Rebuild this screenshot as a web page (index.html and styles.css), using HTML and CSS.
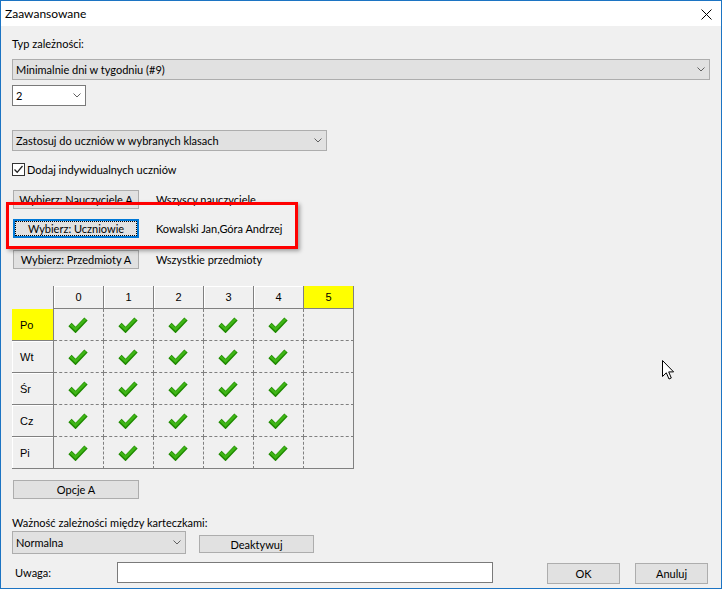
FILE: index.html
```html
<!DOCTYPE html>
<html lang="pl">
<head>
    <meta charset="UTF-8">
    <title>Zaawansowane</title>
    <link rel="stylesheet" href="styles.css">
</head>
<body>
    <svg width="0" height="0" class="defs">
        <symbol id="tick" viewBox="0 0 20 17">
            <path d="M2 8.5 L7.5 14 L18 3" fill="none" stroke="#1f8a00" stroke-width="4.6"/>
            <path d="M2.6 8.6 L7.5 13.2 L17.4 3.2" fill="none" stroke="#3fb516" stroke-width="2.6"/>
        </symbol>
        <symbol id="chev" viewBox="0 0 8 5">
            <path d="M0.5 0.5 L4 4 L7.5 0.5" fill="none" stroke="#606060" stroke-width="1"/>
        </symbol>
    </svg>

    <div class="window">
        <div class="titlebar">
            <span class="title">Zaawansowane</span>
            <svg class="close" width="11" height="11" viewBox="0 0 11 11">
                <path d="M0.5 0.5 L10.5 10.5 M10.5 0.5 L0.5 10.5" stroke="#000" stroke-width="1"/>
            </svg>
        </div>

        <div class="content">
            <div class="label">Typ zależności:</div>
            <div class="combo combo-type">
                <span>Minimalnie dni w tygodniu (#9)</span>
                <svg class="chev"><use href="#chev"/></svg>
            </div>
            <div class="combo combo-num">
                <span>2</span>
                <svg class="chev"><use href="#chev"/></svg>
            </div>
            <div class="combo combo-apply">
                <span>Zastosuj do uczniów w wybranych klasach</span>
                <svg class="chev"><use href="#chev"/></svg>
            </div>

            <div class="check">
                <span class="box">
                    <svg width="11" height="11" viewBox="0 0 11 11"><path d="M1.5 5.5 L4.2 8.3 L9.5 2" fill="none" stroke="#222" stroke-width="1.3"/></svg>
                </span>
                <span>Dodaj indywidualnych uczniów</span>
            </div>

            <div class="pick-list">
                <div class="pick-row">
                    <div class="btn btn-pick">Wybierz: Nauczyciele A</div>
                    <span class="pick-value">Wszyscy nauczyciele</span>
                </div>
                <div class="pick-row row-students">
                    <div class="btn btn-pick btn-focus">Wybierz: Uczniowie</div>
                    <span class="pick-value">Kowalski Jan,Góra Andrzej</span>
                </div>
                <div class="pick-row row-subjects">
                    <div class="btn btn-pick">Wybierz: Przedmioty A</div>
                    <span class="pick-value">Wszystkie przedmioty</span>
                </div>
                <div class="highlight"></div>
            </div>

            <div class="daygrid" id="daygrid"></div>

            <div class="btn btn-pick btn-options">Opcje A</div>

            <div class="label label-weight">Ważność zależności między karteczkami:</div>
            <div class="weight-row">
                <div class="combo combo-weight">
                    <span>Normalna</span>
                    <svg class="chev"><use href="#chev"/></svg>
                </div>
                <div class="btn btn-deact">Deaktywuj</div>
            </div>

            <div class="bottom-row">
                <span class="note-label">Uwaga:</span>
                <div class="note-input"></div>
                <div class="btn btn-ok">OK</div>
                <div class="btn btn-cancel">Anuluj</div>
            </div>
        </div>

        <svg class="cursor" width="13" height="21" viewBox="0 0 13 21">
            <path d="M0.5 0.5 L0.5 16.5 L4.3 12.8 L7 19 L9.3 18 L6.7 11.9 L11.6 11.9 Z" fill="#fff" stroke="#000" stroke-width="1"/>
        </svg>
    </div>

    <script>
        // siatka dni i lekcji
        const dni = ['Po', 'Wt', 'Śr', 'Cz', 'Pi'];
        const lekcje = [0, 1, 2, 3, 4, 5];
        const grid = document.getElementById('daygrid');

        let html = '<div class="corner"></div>';
        lekcje.forEach(function (l) {
            const zolty = l === 5 ? ' yellow' : '';
            html += '<div class="col-head' + zolty + '"><span>' + l + '</span></div>';
        });

        dni.forEach(function (d, i) {
            const zolty = i === 0 ? ' yellow' : '';
            const ostatni = i === dni.length - 1 ? ' last-row' : '';
            html += '<div class="row-head' + zolty + ostatni + '">' + d + '</div>';
            lekcje.forEach(function (l) {
                let cls = 'cell' + ostatni;
                if (l === 5) cls += ' last-col';
                html += '<div class="' + cls + '">';
                if (l < 5) html += '<svg class="tick"><use href="#tick"/></svg>';
                html += '</div>';
            });
        });

        grid.innerHTML = html;
    </script>
</body>
</html>
```

FILE: styles.css
```css
body {
    margin: 0;
    font-family: Lato, "Noto Sans", sans-serif;
    font-size: 11px;
    color: #000;
}
.defs {
    position: absolute;
}
.window {
    position: relative;
    width: 720px;
    height: 587px;
    border: 1px solid #1c74c3;
    background: #f0f0f0;
    overflow: hidden;
}
.titlebar {
    height: 25px;
    background: #fff;
    display: flex;
    align-items: center;
    justify-content: space-between;
    padding: 0 9px 0 4px;
    font-size: 12px;
}
.close {
    display: block;
    margin-top: 1px;
}
.content {
    padding: 10px 11px 0;
}
.label {
    height: 16px;
    line-height: 16px;
}
.combo {
    box-sizing: border-box;
    display: flex;
    align-items: center;
    justify-content: space-between;
    height: 21px;
    border: 1px solid #adadad;
    background: #e1e1e1;
    padding: 0 4px 0 3px;
    white-space: nowrap;
}
.chev {
    width: 8px;
    height: 5px;
    flex: none;
}
.combo-type {
    width: 698px;
    margin-top: 7px;
}
.combo-num {
    width: 74px;
    margin-top: 5px;
    background: #fff;
    border-color: #7a7a7a;
}
.combo-apply {
    width: 315px;
    margin-top: 24px;
}
.check {
    display: flex;
    align-items: center;
    height: 13px;
    margin-top: 12px;
}
.check .box {
    box-sizing: border-box;
    width: 13px;
    height: 13px;
    border: 1px solid #333;
    background: #fff;
    margin-right: 2px;
}
.check .box svg {
    display: block;
}
.btn {
    box-sizing: border-box;
    display: flex;
    align-items: center;
    justify-content: center;
    border: 1px solid #adadad;
    background: #e1e1e1;
    white-space: nowrap;
}
.pick-list {
    position: relative;
    margin-top: 14px;
}
.pick-row {
    display: flex;
    align-items: center;
    height: 19px;
}
.row-students {
    margin-top: 10px;
}
.row-subjects {
    margin-top: 12px;
}
.btn-pick {
    width: 126px;
    height: 19px;
    margin-left: 1px;
}
.btn-focus {
    border-color: #0078d7;
    box-shadow: inset 0 0 0 1px #0078d7;
    outline: 1px dotted #000;
    outline-offset: -3px;
}
.pick-value {
    margin-left: 17px;
}
.highlight {
    position: absolute;
    left: -6px;
    top: 12px;
    width: 292px;
    height: 47px;
    box-sizing: border-box;
    border: 3px solid #f00;
    box-shadow: 2px 2px 4px rgba(0, 0, 0, 0.35);
}
.daygrid {
    display: grid;
    grid-template-columns: 42px repeat(6, 50px);
    grid-template-rows: 23px repeat(5, 32px);
    width: 342px;
    margin-top: 17px;
    font-family: "Liberation Sans", Arial, sans-serif;
    font-size: 11px;
}
.daygrid > div {
    box-sizing: border-box;
}
.corner {
    border-right: 1px solid #808080;
}
.col-head {
    display: flex;
    align-items: center;
    justify-content: center;
    border-right: 1px solid #808080;
    border-bottom: 1px solid #808080;
    box-shadow: inset 1px 1px 0 #fff;
}
.row-head {
    display: flex;
    align-items: center;
    padding-left: 8px;
    border-right: 1px solid #808080;
    border-bottom: 1px solid #808080;
    box-shadow: inset 1px 1px 0 #fff;
}
.yellow {
    background: #ffff00;
    box-shadow: none;
}
.cell {
    display: flex;
    align-items: center;
    justify-content: center;
    border-right: 1px dashed #808080;
    border-bottom: 1px dashed #808080;
}
.cell.last-col {
    border-right: 1px solid #808080;
}
.cell.last-row,
.row-head.last-row {
    border-bottom: 1px solid #808080;
}
.tick {
    width: 20px;
    height: 17px;
    margin-right: 1px;
}
.btn-options {
    margin-top: 11px;
}
.label-weight {
    height: 14px;
    line-height: 14px;
    margin-top: 17px;
}
.weight-row {
    display: flex;
    align-items: flex-start;
    margin-top: 1px;
}
.combo-weight {
    width: 174px;
    height: 23px;
}
.btn-deact {
    width: 115px;
    height: 18px;
    margin: 4px 0 0 13px;
}
.bottom-row {
    display: flex;
    align-items: flex-start;
    margin-top: 8px;
}
.note-label {
    box-sizing: border-box;
    width: 105px;
    padding-left: 3px;
    line-height: 21px;
}
.note-input {
    box-sizing: border-box;
    width: 376px;
    height: 21px;
    border: 1px solid #7a7a7a;
    background: #fff;
}
.btn-ok,
.btn-cancel {
    width: 73px;
    height: 21px;
    margin-top: 1px;
}
.btn-ok {
    margin-left: 54px;
}
.btn-cancel {
    margin-left: 15px;
}
.cursor {
    position: absolute;
    left: 661px;
    top: 359px;
}
```
